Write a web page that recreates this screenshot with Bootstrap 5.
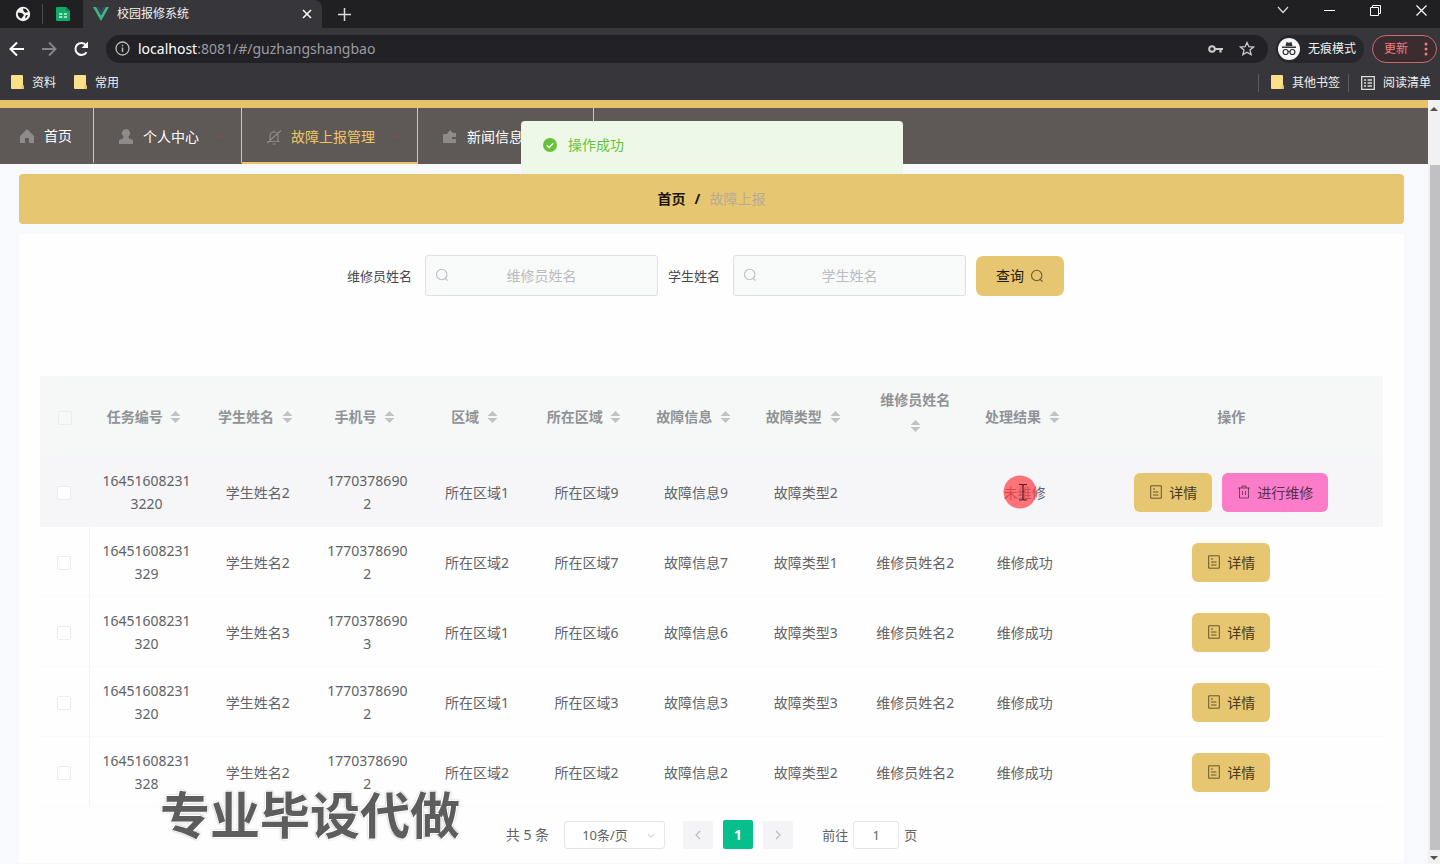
<!DOCTYPE html>
<html lang="zh-CN">
<head>
<meta charset="utf-8">
<meta name="viewport" content="width=device-width, initial-scale=1">
<title>校园报修系统</title>
<link rel="stylesheet" href="https://cdn.jsdelivr.net/npm/bootstrap@5.3.0/dist/css/bootstrap.min.css">
<style>
  :root { --gold: #e6c670; --chrome: #37363a; --chrome-dark: #201f22; }
  body { font-family: "Noto Sans", "Noto Sans CJK SC", sans-serif; font-size: 14px; line-height: 24px; color: #606266; background: #f8f9fd; }
  a { text-decoration: none; color: inherit; }
  button { font: inherit; }
  .plain-btn { background: none; border: 0; padding: 0; color: inherit; display: inline-flex; align-items: center; }

  /* browser window */
  .browser { background: var(--chrome); color: #f1f1f1; font-size: 12px; }
  .tab-strip { background: var(--chrome-dark); height: 28px; }
  .pinned { width: 42px; }
  .pinned + .pinned { border-left: 1px solid #4a4a4d; width: 41px; height: 20px; }
  .live-tab { background: var(--chrome); width: 239px; height: 28px; border-radius: 0 8px 0 0; padding: 0 10px 0 10px; }
  .win-ctl { gap: 35px; padding-right: 13px; }
  .toolbar { height: 41px; padding: 0 3px 0 9px; }
  .address { background: #222126; border-radius: 14px; height: 28px; padding: 0 13px 0 9px; font-size: 14px; color: #9b9ba0; }
  .address b { font-weight: 400; color: #fff; }
  .mode { background: #27262a; border-radius: 15px; height: 28px; padding: 0 8px 0 2px; }
  .update { border: 1px solid #c96a70; border-radius: 14px; height: 28px; padding: 0 8px 0 11px; color: #ee7f82; background: #3b2c30; }
  .bookmarks { height: 31px; padding: 0 9px 4px 11px; }
  .bookmarks .rule { width: 1px; height: 18px; background: #5c5c60; }
  .bookmarks .saved { gap: 18px; }

  /* site navigation */
  .site-top { border-top: 8px solid #e6c36b; background: #5e5857; height: 64px; color: #fff; }
  .site-top a { border-right: 1px solid #c9c6c4; height: 56px; padding: 4px 17px 0 24px; gap: 17px; border-bottom: 2px solid transparent; }
  .site-top a.first { padding: 2px 21px 0 19px; gap: 9px; }
  .site-top a.current { color: #edc763; border-bottom-color: #edc26b; }
  .site-top svg { color: #8f8b8a; flex: none; }
  .nav-lead { gap: 9px; }
  .arrow { width: 8px; height: 2px; background: #755252; }
  .toast-ok { position: absolute; top: 21px; left: calc(50% - 193px); width: 382px; height: 60px; padding: 12px 21px; background: #edf8e8; border-radius: 4px; color: #67c23a; gap: 10px; }

  .page-body { padding: 10px 24px 0 19px; }
  .crumbs { background: var(--gold); border-radius: 4px; height: 50px; position: relative; gap: 9px; color: #1b1608; margin-bottom: 10px; }
  .crumbs a { font-weight: 700; }
  .crumbs span { color: #b6ab96; }
  .panel { background: #fefefe; padding: 21px 21px 14px; }
  .search-row { gap: 10px; margin-bottom: 80px; margin-left: -12px; }
  .search-row label { font-size: 13px; color: #45474b; margin-right: 3px; }
  .search-box { position: relative; width: 233px; }
  .search-box input { width: 100%; height: 41px; border: 1px solid #dfe0e2; border-radius: 3px; background: #f8f9f9; text-align: center; padding: 0 28px; }
  .search-box input::placeholder { color: #b9bcc0; }
  .search-box svg { position: absolute; left: 10px; top: 13px; color: #bcbfc3; }
  .act { border: 0; border-radius: 6px; height: 40px; padding: 0 20px; background: var(--gold); color: #46391c; display: inline-flex; align-items: center; gap: 6px; }
  .act.query { color: #1e1808; border-radius: 7px; height: 40px; }
  .act.query svg { color: #6e5b2e; }
  .act.detail { padding: 0 15px; height: 39px; }
  .act.repair { padding: 0 15px; height: 39px; background: #fb7cc8; color: #59304b; margin-left: 10px; }

  .grid { width: 100%; table-layout: fixed; text-align: center; border-collapse: separate; border-spacing: 0; }
  .grid .c-check { width: 50px; }
  .grid .c-id { width: 113px; }
  .grid .c-std { width: 8.16%; }
  .grid th { background: #f6f7f7; height: 81px; color: #909396; font-weight: 700; padding: 0 10px; line-height: 26px; }
  .grid td { height: 70px; padding: 1px 12px 0; border-bottom: 1px solid #fafafb; line-height: 23px; word-break: break-all; }
  .grid td:first-child { border-right: 1px solid #f3f4f5; }
  .grid td.tight { padding: 1px 4px 0; }
  .grid .hovered td { background: #f6f6f9; border-color: #f6f6f9; }
  .grid th:first-child, .grid td:first-child { padding: 0; }
  .grid input { appearance: none; width: 14px; height: 14px; border: 1px solid #e9ebed; border-radius: 2px; background: #fff; vertical-align: middle; margin: 0 2px 0 0; }
  .grid th input { background: #f7f8f8; margin: 0; }
  .sort { display: inline-block; width: 11px; height: 14px; margin: 0 5px 0 4px; vertical-align: -2px; color: #c0c3c6; }
  .sort.below { margin: 0; }
  .pointer { position: absolute; left: 50%; top: 50%; margin: -17px 0 0 -22px; }

  .pager { gap: 10px; padding-top: 13px; }
  .pager .total { margin-right: 5px; }
  .pager select { appearance: none; width: 101px; height: 28px; border: 1px solid #e3e5e9; border-radius: 3px; background: #fff; color: #606266; padding: 0 0 0 17px; font-size: 13px; }
  .pager .step { width: 30px; height: 28px; background: #f4f4f6; color: #b9bcc3; justify-content: center; border-radius: 2px; }
  .pager .step.on { background: #05c08b; color: #fff; font-weight: 700; height: 29px; }
  .pager .jump { width: 46px; height: 28px; border: 1px solid #e3e5e9; border-radius: 3px; text-align: center; color: #606266; background: #fff; font-size: 13px; }
  .pager .goto-box { font-size: 13px; margin-left: 19px; gap: 5px; }
  .size-arrow { position: absolute; right: 10px; top: 12px; color: #c0c4cc; }

  .rail { width: 12px; background: #f1f1f1; flex: none; padding: 6px 0 3px; }
  .rail div { background: #c1c1c3; width: 10px; margin: 54px 0 6px 2px; }
  .watermark { position: absolute; left: 160px; bottom: 13px; font-size: 50px; line-height: 72px; font-weight: 700; color: #5d5d5d; text-shadow: 0 0 1px #fff, 1px 1px 0 #fff, -1px -1px 0 #fff, 0 0 3px #777; pointer-events: none; white-space: nowrap; }
</style>
</head>
<body class="d-flex flex-column min-vh-100 position-relative">

<svg class="d-none">
  <symbol id="i-search" viewBox="0 0 14 14"><circle cx="6.7" cy="6.5" r="5.2" fill="none" stroke="currentColor" stroke-width="1.1"/><path d="M10.2 10.5 12.6 12.6" stroke="currentColor" stroke-width="1.1"/></symbol>
  <symbol id="i-sort" viewBox="0 0 11 14"><path d="M5.5 1 10.500 6H.5zM5.500 13 .5 8h10z" fill="currentColor"/></symbol>
  <symbol id="i-doc" viewBox="0 0 14 14"><path d="M1.700.8h10.600v12.400H1.700zM4 4h2M4 7h5.500M4 10h5.500" fill="none" stroke="currentColor" stroke-width=".8"/></symbol>
  <symbol id="i-bin" viewBox="0 0 14 14"><path d="M1 3h12M2.500 3v10h9V3M5 3V1h4v2M5.500 6v4M8.500 6v4" fill="none" stroke="currentColor" stroke-width=".8"/></symbol>
  <symbol id="i-folder" viewBox="0 0 13 15"><path d="M1 0h10a1 1 0 0 1 1 1v9l1 1v3H1a1 1 0 0 1-1-1V1a1 1 0 0 1 1-1z" fill="#fbe08a"/><path d="M10.500 10v4H13v-3z" fill="#e6c25f"/></symbol>
</svg>

<header class="browser">
  <div class="tab-strip d-flex align-items-center">
    <div class="pinned d-flex justify-content-center ps-1">
      <svg width="16" height="16" viewBox="0 0 16 16"><circle cx="8" cy="8" r="7.200" fill="#f4f4f4"/><path d="M3 6.500 7 7l2 2-2.500 3.500C4.500 12 3 10.500 2.700 8zM8 2.500l3 .5 2.200 3-3 .7L8.500 5zM11 9l2 .2-2.200 3.500-.6-1.700z" fill="#202023"/></svg>
    </div>
    <div class="pinned d-flex justify-content-center align-items-center">
      <svg width="14" height="14" viewBox="0 0 14 14"><path d="M1 0h9l4 4v9a1 1 0 0 1-1 1H1a1 1 0 0 1-1-1V1a1 1 0 0 1 1-1z" fill="#10ab69"/><path d="M10 0v4h4z" fill="#0b8752"/><path d="M3 7h3.500M8 7h3M3 10h3.500M8 10h3" stroke="#c9f3df" stroke-width="1.500"/></svg>
    </div>
    <div class="live-tab d-flex align-items-center">
      <svg class="me-2" width="16" height="14" viewBox="0 0 16 14"><path d="M0 0h3.200L8 8.400 12.800 0H16L8 14z" fill="#41b883"/><path d="M3.200 0H6l2 3.500L10 0h2.800L8 8.400z" fill="#35495e"/></svg>
      <span class="flex-grow-1">校园报修系统</span>
      <button class="plain-btn" aria-label="关闭标签页"><svg width="10" height="10" viewBox="0 0 10 10"><path d="m1 1 8 8m0-8-8 8" stroke="#fff" stroke-width="1.500"/></svg></button>
    </div>
    <button class="plain-btn ms-3" aria-label="新标签页"><svg width="13" height="13" viewBox="0 0 13 13"><path d="M6.500 0v13M0 6.500h13" stroke="#ddd" stroke-width="1.500"/></svg></button>
    <div class="win-ctl d-flex align-items-center ms-auto pb-2">
      <button class="plain-btn" aria-label="搜索标签页"><svg width="12" height="8" viewBox="0 0 12 8"><path d="m1 1 5 5.500L11 1" fill="none" stroke="#ddd" stroke-width="1.200"/></svg></button>
      <button class="plain-btn" aria-label="最小化"><svg width="11" height="10" viewBox="0 0 11 10"><path d="M0 5.500h11" stroke="#fff"/></svg></button>
      <button class="plain-btn" aria-label="还原"><svg width="11" height="11" viewBox="0 0 11 11"><path d="M.5 2.500h8v8h-8zM2.500 2.500v-2h8v8h-2" fill="none" stroke="#fff"/></svg></button>
      <button class="plain-btn" aria-label="关闭"><svg width="11" height="11" viewBox="0 0 11 11"><path d="m.5.5 10 10m0-10-10 10" stroke="#fff" stroke-width="1.200"/></svg></button>
    </div>
  </div>
  <div class="toolbar d-flex align-items-center">
    <button class="plain-btn" aria-label="后退"><svg width="16" height="16" viewBox="0 0 16 16"><path d="M15 8H2M8 1.500 1.500 8 8 14.500" fill="none" stroke="#fff" stroke-width="2"/></svg></button>
    <button class="plain-btn mx-3" aria-label="前进"><svg width="16" height="16" viewBox="0 0 16 16"><path d="M1 8h13M8 1.500 14.500 8 8 14.500" fill="none" stroke="#858588" stroke-width="2"/></svg></button>
    <button class="plain-btn" aria-label="刷新"><svg width="17" height="16" viewBox="0 0 17 16"><path d="M13.500 11.200A6 6 0 1 1 13 4" fill="none" stroke="#fff" stroke-width="2"/><path d="M15 .5v6.500H8.500z" fill="#fff"/></svg></button>
    <div class="address d-flex align-items-center flex-grow-1 ms-3">
      <svg class="me-2" width="15" height="15" viewBox="0 0 15 15"><circle cx="7.500" cy="7.500" r="6.500" fill="none" stroke="#bbb" stroke-width="1.300"/><path d="M7.500 6.500V11M7.500 3.700v1.600" stroke="#bbb" stroke-width="1.500"/></svg>
      <span class="flex-grow-1"><b>localhost</b>:8081/#/guzhangshangbao</span>
      <svg width="15" height="10" viewBox="0 0 15 10"><circle cx="4" cy="5" r="2.800" fill="none" stroke="#ccc" stroke-width="2"/><path d="M7 5h8M12.500 5v3.500" stroke="#ccc" stroke-width="2.200"/></svg>
      <svg class="ms-3" width="16" height="15" viewBox="0 0 16 15"><path d="m8 1.500 1.900 4.200 4.600.4-3.500 3 1.100 4.500L8 11.200l-4.100 2.400L5 9.100l-3.500-3 4.600-.4z" fill="none" stroke="#ccc" stroke-width="1.300"/></svg>
    </div>
    <div class="mode d-flex align-items-center ms-2 me-1 gap-2">
      <svg width="22" height="22" viewBox="0 0 22 22"><circle cx="11" cy="11" r="11" fill="#f5f5f7"/><path d="M7.500 8 8.500 4l2.500.8L13.500 4l1 4zM4 8.500h14v1.500H4z" fill="#333"/><circle cx="7.600" cy="14" r="2.500" fill="none" stroke="#333" stroke-width="1.200"/><circle cx="14.400" cy="14" r="2.500" fill="none" stroke="#333" stroke-width="1.200"/><path d="M10 13.500h2" stroke="#333"/></svg>
      <span>无痕模式</span>
    </div>
    <button class="update d-flex align-items-center ms-1 gap-3"><span>更新</span><svg width="4" height="14" viewBox="0 0 4 14"><g fill="currentColor"><circle cx="2" cy="2" r="1.500"/><circle cx="2" cy="7" r="1.500"/><circle cx="2" cy="12" r="1.500"/></g></svg></button>
  </div>
  <nav class="bookmarks d-flex align-items-center" aria-label="书签">
    <div class="saved d-flex">
      <a href="#" class="d-flex align-items-center gap-2"><svg width="13" height="15"><use href="#i-folder"/></svg>资料</a>
      <a href="#" class="d-flex align-items-center gap-2"><svg width="13" height="15"><use href="#i-folder"/></svg>常用</a>
    </div>
    <span class="rule ms-auto me-2"></span>
    <a href="#" class="d-flex align-items-center ms-1 me-2"><svg class="me-2" width="13" height="15"><use href="#i-folder"/></svg>其他书签</a>
    <span class="rule me-2"></span>
    <a href="#" class="d-flex align-items-center ms-1"><svg class="me-2" width="14" height="14" viewBox="0 0 14 14"><path d="M.7.7h12.600v12.600H.7zM3 4h2M6.500 4H11M3 7h2M6.500 7H11M3 10h2M6.500 10H11" fill="none" stroke="#ddd" stroke-width="1.300"/></svg>阅读清单</a>
  </nav>
</header>

<div class="d-flex flex-grow-1">
  <main class="flex-grow-1 position-relative">
    <nav class="site-top d-flex" aria-label="主导航">
      <a href="#" class="first d-flex align-items-center"><svg width="16" height="16" viewBox="0 0 16 16"><path d="M8 1 1 8v7h5v-5h4v5h5V8z" fill="currentColor"/></svg>首页</a>
      <a href="#" class="d-flex align-items-center"><span class="nav-lead d-flex align-items-center"><svg width="16" height="16" viewBox="0 0 16 16"><path d="M8 0a4 4 0 0 1 2.500 7.200L11 9.500l4 1.500v4H1v-4l4-1.500.5-2.300A4 4 0 0 1 8 0z" fill="currentColor"/></svg>个人中心</span><i class="arrow"></i></a>
      <a href="#" class="current d-flex align-items-center"><span class="nav-lead d-flex align-items-center"><svg width="16" height="16" viewBox="0 0 16 16"><path d="M2.500 12.500h11M4 12V7a4 4 0 0 1 8 0v5M6.500 15h3M8 1.500V3M1 14 15 1.500" fill="none" stroke="currentColor" stroke-width="1.200"/></svg>故障上报管理</span><i class="arrow"></i></a>
      <a href="#" class="d-flex align-items-center"><span class="nav-lead d-flex align-items-center"><svg width="16" height="16" viewBox="0 0 16 16"><path d="M1 5h4l3-4 3 3h3v4h-4v2h4v4H1z" fill="currentColor"/></svg>新闻信息管理</span><i class="arrow"></i></a>
    </nav>
    <div class="toast-ok d-flex align-items-start" role="alert">
      <svg class="mt-1" width="16" height="16" viewBox="0 0 16 16"><circle cx="8" cy="8" r="7" fill="#67c23a"/><path d="m4.800 8.200 2.400 2.300 4-4.300" fill="none" stroke="#fff" stroke-width="1.300"/></svg>
      <span>操作成功</span>
    </div>

    <div class="page-body">
      <nav class="crumbs d-flex align-items-center justify-content-center" aria-label="面包屑"><a href="#">首页</a><b>/</b><span>故障上报</span></nav>

      <section class="panel">
        <form class="search-row d-flex flex-wrap align-items-center justify-content-center">
          <label for="worker">维修员姓名</label>
          <div class="search-box"><svg width="14" height="14"><use href="#i-search"/></svg><input id="worker" type="text" placeholder="维修员姓名"></div>
          <label for="student">学生姓名</label>
          <div class="search-box"><svg width="14" height="14"><use href="#i-search"/></svg><input id="student" type="text" placeholder="学生姓名"></div>
          <button type="button" class="act query">查询<svg width="14" height="14"><use href="#i-search"/></svg></button>
        </form>

        <table class="grid">
          <colgroup><col class="c-check"><col class="c-id"><col class="c-std" span="8"><col></colgroup>
          <thead>
            <tr>
              <th><input type="checkbox" aria-label="全选"></th>
              <th>任务编号 <svg class="sort"><use href="#i-sort"/></svg></th>
              <th>学生姓名 <svg class="sort"><use href="#i-sort"/></svg></th>
              <th>手机号 <svg class="sort"><use href="#i-sort"/></svg></th>
              <th>区域 <svg class="sort"><use href="#i-sort"/></svg></th>
              <th>所在区域 <svg class="sort"><use href="#i-sort"/></svg></th>
              <th>故障信息 <svg class="sort"><use href="#i-sort"/></svg></th>
              <th>故障类型 <svg class="sort"><use href="#i-sort"/></svg></th>
              <th class="pb-2">维修员姓名<br><svg class="sort below"><use href="#i-sort"/></svg></th>
              <th>处理结果 <svg class="sort"><use href="#i-sort"/></svg></th>
              <th>操作</th>
            </tr>
          </thead>
          <tbody>
            <tr class="hovered">
              <td><input type="checkbox" aria-label="选择第1行"></td><td>164516082313220</td><td>学生姓名2</td><td>17703786902</td><td>所在区域1</td><td>所在区域9</td><td>故障信息9</td><td>故障类型2</td><td></td>
              <td class="position-relative">未维修<svg class="pointer" width="34" height="34" viewBox="0 0 34 34"><circle cx="17" cy="17" r="16.500" fill="#ff4048" fill-opacity=".72"/><path d="M16 9.500h3l1 1 1-1h3M20 10.500v13M16 25h3l1-1.500 1 1.500h3" fill="none" stroke="#4a2025" stroke-width="1.200"/></svg></td>
              <td class="tight"><button class="act detail"><svg width="14" height="14"><use href="#i-doc"/></svg>详情</button><button class="act repair"><svg width="14" height="14"><use href="#i-bin"/></svg>进行维修</button></td>
            </tr>
            <tr><td><input type="checkbox" aria-label="选择第2行"></td><td>16451608231329</td><td>学生姓名2</td><td>17703786902</td><td>所在区域2</td><td>所在区域7</td><td>故障信息7</td><td>故障类型1</td><td>维修员姓名2</td><td>维修成功</td><td class="tight"><button class="act detail"><svg width="14" height="14"><use href="#i-doc"/></svg>详情</button></td></tr>
            <tr><td><input type="checkbox" aria-label="选择第3行"></td><td>16451608231320</td><td>学生姓名3</td><td>17703786903</td><td>所在区域1</td><td>所在区域6</td><td>故障信息6</td><td>故障类型3</td><td>维修员姓名2</td><td>维修成功</td><td class="tight"><button class="act detail"><svg width="14" height="14"><use href="#i-doc"/></svg>详情</button></td></tr>
            <tr><td><input type="checkbox" aria-label="选择第4行"></td><td>16451608231320</td><td>学生姓名2</td><td>17703786902</td><td>所在区域1</td><td>所在区域3</td><td>故障信息3</td><td>故障类型3</td><td>维修员姓名2</td><td>维修成功</td><td class="tight"><button class="act detail"><svg width="14" height="14"><use href="#i-doc"/></svg>详情</button></td></tr>
            <tr><td><input type="checkbox" aria-label="选择第5行"></td><td>16451608231328</td><td>学生姓名2</td><td>17703786902</td><td>所在区域2</td><td>所在区域2</td><td>故障信息2</td><td>故障类型2</td><td>维修员姓名2</td><td>维修成功</td><td class="tight"><button class="act detail"><svg width="14" height="14"><use href="#i-doc"/></svg>详情</button></td></tr>
          </tbody>
        </table>

        <div class="pager d-flex align-items-center justify-content-center">
          <span class="total">共 5 条</span>
          <div class="position-relative me-2"><select aria-label="每页条数"><option>10条/页</option></select><svg class="size-arrow" width="8" height="6" viewBox="0 0 8 6"><path d="m1 1 3 3.500L7 1" fill="none" stroke="currentColor"/></svg></div>
          <button class="plain-btn step" aria-label="上一页"><svg width="6" height="10" viewBox="0 0 6 10"><path d="M5 1 1 5l4 4" fill="none" stroke="currentColor" stroke-width="1.200"/></svg></button>
          <button class="plain-btn step on">1</button>
          <button class="plain-btn step" aria-label="下一页"><svg width="6" height="10" viewBox="0 0 6 10"><path d="m1 1 4 4-4 4" fill="none" stroke="currentColor" stroke-width="1.200"/></svg></button>
          <span class="goto-box d-flex align-items-center"><label for="goto">前往</label><input id="goto" class="jump" type="text" value="1"><span>页</span></span>
        </div>
      </section>
    </div>
  </main>
  <div class="rail d-flex flex-column align-items-center" aria-hidden="true">
    <svg width="8" height="5" viewBox="0 0 8 5"><path d="M0 5 4 1l4 4z" fill="#505050"/></svg>
    <div class="flex-grow-1"></div>
    <svg width="8" height="5" viewBox="0 0 8 5"><path d="m0 0 4 4 4-4z" fill="#505050"/></svg>
  </div>
</div>
<div class="watermark">专业毕设代做</div>

<script src="https://cdn.jsdelivr.net/npm/bootstrap@5.3.0/dist/js/bootstrap.bundle.min.js"></script>
</body>
</html>
